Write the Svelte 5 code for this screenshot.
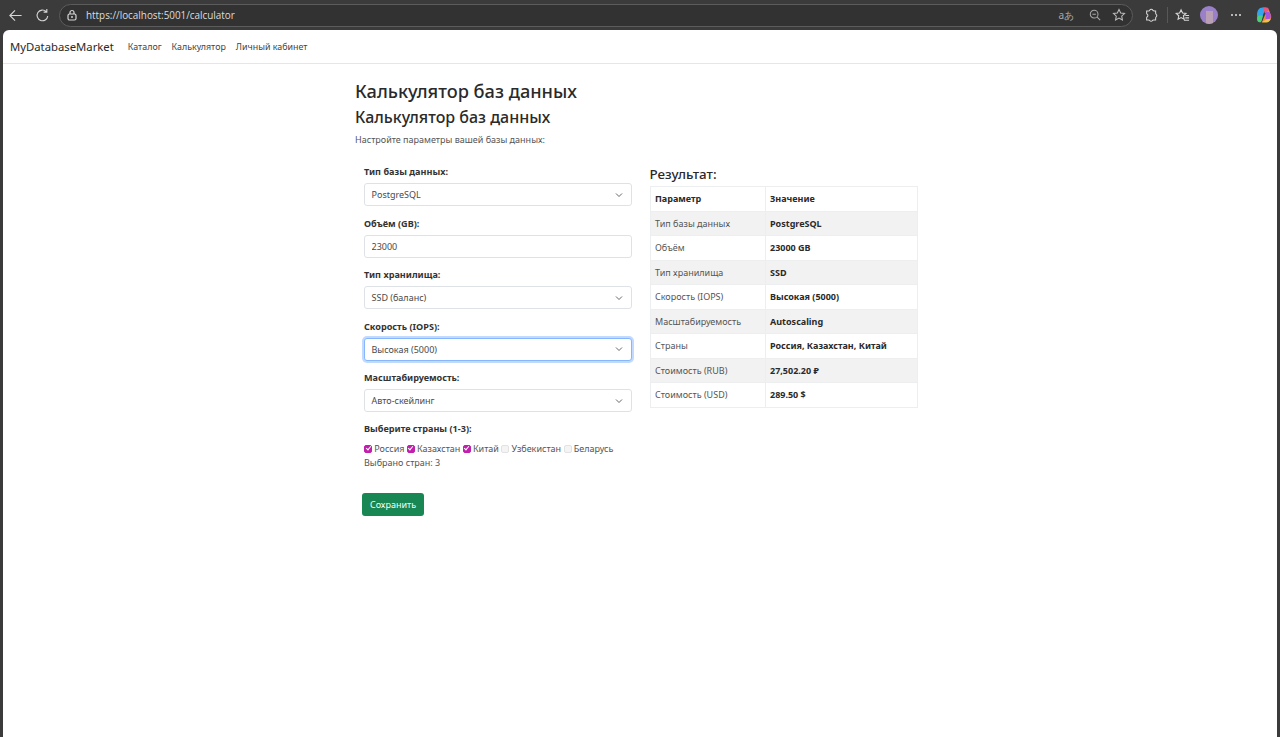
<script>
  const fields = [
    { label: 'Тип базы данных:', value: 'PostgreSQL' },
    { label: 'Объём (GB):', value: '23000', input: true },
    { label: 'Тип хранилища:', value: 'SSD (баланс)' },
    { label: 'Скорость (IOPS):', value: 'Высокая (5000)', focus: true },
    { label: 'Масштабируемость:', value: 'Авто-скейлинг' }
  ];

  const countries = [
    { name: 'Россия', on: true },
    { name: 'Казахстан', on: true },
    { name: 'Китай', on: true },
    { name: 'Узбекистан', on: false },
    { name: 'Беларусь', on: false }
  ];

  const rows = [
    ['Тип базы данных', 'PostgreSQL'],
    ['Объём', '23000 GB'],
    ['Тип хранилища', 'SSD'],
    ['Скорость (IOPS)', 'Высокая (5000)'],
    ['Масштабируемость', 'Autoscaling'],
    ['Страны', 'Россия, Казахстан, Китай'],
    ['Стоимость (RUB)', '27,502.20 ₽'],
    ['Стоимость (USD)', '289.50 $']
  ];
</script>

<div class="window">
  <header class="chrome">
    <svg class="ic back" viewBox="0 0 16 16"><path d="M14.5 8H2M7.5 2.5 2 8l5.5 5.5" /></svg>
    <svg class="ic reload" viewBox="0 0 16 16"><path d="M13.6 8.500A5.700 5.700 0 1 1 12 3.900M12.600 1v3.400H9.200" /></svg>
    <div class="address">
      <svg class="ic lock" viewBox="0 0 12 12"><rect x="2" y="5" width="8" height="6" rx="1.500" /><path d="M4 5V3.500a2 2 0 0 1 4 0V5" /><circle cx="6" cy="8" r=".4" /></svg>
      <span class="url">https://localhost:5001/calculator</span>
      <span class="spacer"></span>
      <span class="translate">aあ</span>
      <svg class="ic zoomi" viewBox="0 0 14 14"><circle cx="6" cy="6" r="4.500" /><path d="M9.500 9.500 13 13M4 6h4" /></svg>
      <svg class="ic star" viewBox="0 0 16 16"><path d="m8 1.800 1.900 4 4.400.5-3.200 3 .8 4.400L8 11.600l-3.900 2.100.8-4.400-3.200-3 4.400-.5z" /></svg>
    </div>
    <svg class="ic ext" viewBox="0 0 16 16"><path d="M6.500 2.500a2 2 0 0 1 3.600 0c.3.700 1 .9 2 .9h1.200v2.300c0 1 .2 1.200.6 1.500a1.900 1.900 0 0 1 0 3c-.4.3-.6.6-.6 1.400v2H11c-.8 0-1 .2-1.300.6a1.900 1.900 0 0 1-3.200 0c-.3-.4-.6-.6-1.300-.6H3v-2.400c0-.7.3-.9.7-1.200a1.700 1.700 0 0 0 0-2.800C3.300 6.900 3 6.600 3 6V3.400h2.200c.6 0 1-.3 1.300-.9z" /></svg>
    <span class="divider"></span>
    <svg class="ic fav" viewBox="0 0 16 16"><path d="M6.500 2 8.100 5.300 11.700 5.800 9 8.300 9.700 12 6.500 10.200 3.300 12 4 8.300 1.300 5.800 4.900 5.300zM11 8h4M11 10.500h4M9.500 13h5.500" /></svg>
    <div class="avatar"><span class="avatar-mark"></span></div>
    <span class="dots"><i></i><i></i><i></i></span>
    <svg class="copilot" viewBox="0 0 18 18">
      <path d="M2 9c0-4 2-7.500 5.500-7.500H11L8 9l-2 7C3.500 16 2 12.500 2 9z" fill="#35a4ea" />
      <path d="M2 13c0-2 1-3.500 3-3.500h3L6.500 15c-.4 1.200-1 1.500-2 1.300C3 16 2 14.800 2 13z" fill="#4bd07a" />
      <path d="M8 1.500h3.500c1 0 2 .7 2.300 1.700L15 7l-5 .5z" fill="#e8557f" />
      <path d="M13.500 4 16 9c.8 3.500-1 7-4.500 7H7l3-7z" fill="#f08a3c" />
      <path d="M11 6h3.500l1.200 3c.5 2-.5 4-2.200 4h-3z" fill="#a654e0" />
      <path d="M6.500 16.500h5c1.700 0 3.500-1.200 4-3.500l-4.500.5z" fill="#f5c23c" />
    </svg>
  </header>

  <div class="page">
    <nav class="navbar">
      <span class="brand">MyDatabaseMarket</span>
      <span class="nav-link">Каталог</span>
      <span class="nav-link">Калькулятор</span>
      <span class="nav-link">Личный кабинет</span>
    </nav>

    <main class="container">
      <h1>Калькулятор баз данных</h1>
      <h2>Калькулятор баз данных</h2>
      <p class="lead">Настройте параметры вашей базы данных:</p>

      <div class="columns">
        <form class="form" onsubmit={(e) => e.preventDefault()}>
          {#each fields as f}
            <div class="field">
              <div class="label">{f.label}</div>
              {#if f.input}
                <input class="control" type="text" value={f.value} />
              {:else}
                <div class="control select" class:focus={f.focus}>
                  <span>{f.value}</span>
                  <svg class="chevron" viewBox="0 0 16 16"><path d="m2 5 6 6 6-6" /></svg>
                </div>
              {/if}
            </div>
          {/each}

          <div class="label countries-label">Выберите страны (1-3):</div>
          <div class="countries">
            {#each countries as c}
              <label class="country"><input type="checkbox" checked={c.on} />{c.name}</label>
            {/each}
          </div>
          <div class="picked">Выбрано стран: 3</div>

          <button class="save" type="submit">Сохранить</button>
        </form>

        <section class="result">
          <h4>Результат:</h4>
          <table>
            <thead>
              <tr><th>Параметр</th><th>Значение</th></tr>
            </thead>
            <tbody>
              {#each rows as r}
                <tr><td>{r[0]}</td><td class="val">{r[1]}</td></tr>
              {/each}
            </tbody>
          </table>
        </section>
      </div>
    </main>
  </div>
</div>

<style>
  :global(body) {
    margin: 0;
    background: #3b3b3b;
  }

  .window {
    width: 1280px;
    height: 737px;
    display: flex;
    flex-direction: column;
    overflow: hidden;
    background: #3b3b3b;
    font-family: "Noto Sans", "Open Sans", sans-serif;
  }

  /* browser bar */
  .chrome {
    height: 30px;
    flex: none;
    display: flex;
    align-items: center;
    padding-left: 8px;
    box-sizing: border-box;
  }

  .ic {
    fill: none;
    stroke: #d6d6d6;
    stroke-width: 1.2;
    flex: none;
  }

  .back { width: 15px; height: 15px; }
  .reload { width: 15px; height: 15px; margin-left: 12px; }

  .address {
    width: 1074px;
    height: 23px;
    margin-left: 9px;
    border: 1px solid #5c5c5c;
    border-radius: 12px;
    box-sizing: border-box;
    background: #323232;
    display: flex;
    align-items: center;
    padding-left: 6px;
  }

  .lock { width: 12px; height: 12px; }

  .url {
    margin-left: 8px;
    font-family: "Open Sans", sans-serif;
    font-size: 9.9px;
    color: #dcdcdc;
  }

  .spacer { flex: 1; }

  .translate {
    font-size: 10px;
    color: #a8a8a8;
  }

  .zoomi { width: 12px; height: 12px; margin-left: 15px; stroke: #a8a8a8; }
  .star { width: 14px; height: 14px; margin-left: 11px; margin-right: 6px; stroke: #bdbdbd; }

  .ext { width: 14px; height: 14px; margin-left: 11px; }

  .divider {
    width: 1px;
    height: 16px;
    margin-left: 9px;
    background: #585858;
  }

  .fav { width: 15px; height: 15px; margin-left: 7px; }

  .avatar {
    width: 18px;
    height: 18px;
    margin-left: 10px;
    border-radius: 50%;
    background: #9a80c8;
    overflow: hidden;
    display: flex;
    justify-content: center;
    align-items: flex-end;
  }

  .avatar-mark {
    width: 7px;
    height: 13px;
    background: #b9a0b4;
  }

  .dots {
    display: flex;
    gap: 2px;
    margin-left: 13px;
  }

  .dots i {
    width: 2px;
    height: 2px;
    border-radius: 50%;
    background: #e0e0e0;
  }

  .copilot { width: 18px; height: 18px; margin-left: 14px; flex: none; }

  /* page */
  .page {
    flex: 1;
    margin: 0 3px;
    background: #fff;
    border-radius: 6px 6px 0 0;
    color: #212529;
  }

  .navbar {
    height: 34px;
    box-sizing: border-box;
    border-bottom: 1px solid #e6e6e6;
    display: flex;
    align-items: center;
    padding-left: 7px;
  }

  .brand {
    font-size: 11.3px;
    margin-right: 14px;
    color: #2a2a2a;
  }

  .nav-link {
    font-size: 8.9px;
    margin-right: 10px;
    color: #444;
  }

  .container {
    width: 570px;
    margin-left: 352px;
    padding-top: 15px;
  }

  h1 {
    margin: 0;
    font-size: 18.2px;
    line-height: 24px;
    font-weight: 500;
    color: #2a2a2a;
  }

  h2 {
    margin: 3px 0 0;
    font-size: 16px;
    line-height: 22px;
    font-weight: 500;
    color: #2a2a2a;
  }

  .lead {
    margin: 5px 0 0;
    font-size: 9px;
    line-height: 14px;
    color: #555;
  }

  .columns {
    display: flex;
    margin-top: 18px;
  }

  .form {
    width: 268px;
    margin-left: 9px;
  }

  .field {
    margin-bottom: 10.5px;
  }

  .label {
    font-size: 9.1px;
    line-height: 14px;
    font-weight: 700;
    color: #333;
    margin-bottom: 4px;
  }

  .control {
    display: block;
    width: 100%;
    height: 23px;
    box-sizing: border-box;
    border: 1px solid #dee2e6;
    border-radius: 3px;
    padding: 0 6.5px;
    font-family: inherit;
    font-size: 9px;
    color: #4a4a4a;
    background: #fff;
    outline: none;
  }

  .select {
    display: flex;
    align-items: center;
    justify-content: space-between;
    padding-right: 8px;
  }

  .focus {
    border-color: #86b7fe;
    box-shadow: 0 0 0 2px #c2daff;
  }

  .chevron {
    width: 8px;
    height: 8px;
    fill: none;
    stroke: #555;
    stroke-width: 1.8;
  }

  .countries-label {
    margin-top: -1px;
    margin-bottom: 6px;
  }

  .countries {
    display: flex;
    gap: 2.4px;
    font-size: 9px;
    line-height: 14px;
    color: #555;
  }

  .country {
    display: flex;
    align-items: center;
    white-space: nowrap;
  }

  .country input {
    appearance: none;
    position: relative;
    width: 8px;
    height: 8px;
    margin: 0 2.2px 0 0;
    box-sizing: border-box;
    border: 1px solid #e2e2e2;
    border-radius: 2px;
    background: #f4f4f4;
  }

  .country input:checked {
    border-color: #c21fae;
    background: #c21fae;
  }

  .country input:checked::after {
    content: '';
    position: absolute;
    left: 1.5px;
    top: -0.5px;
    width: 2px;
    height: 4px;
    border: solid #fff;
    border-width: 0 1px 1px 0;
    transform: rotate(40deg);
  }

  .picked {
    font-size: 9px;
    line-height: 14px;
    color: #555;
  }

  .save {
    display: block;
    margin: 23px 0 0 -2px;
    width: 62px;
    height: 23px;
    border: none;
    border-radius: 3px;
    background: #198754;
    color: #f2fff8;
    font-family: inherit;
    font-size: 9px;
    padding: 0;
  }

  .result {
    margin-left: 17.5px;
    width: 268px;
    margin-top: -1px;
  }

  h4 {
    margin: 0 0 2px;
    font-size: 13.4px;
    line-height: 20px;
    font-weight: 500;
    color: #2a2a2a;
  }

  table {
    width: 268px;
    border-collapse: collapse;
    table-layout: fixed;
    font-size: 9px;
    color: #555;
  }

  th, td {
    height: 24.5px;
    box-sizing: border-box;
    border: 1px solid #eceeef;
    padding: 0 4.5px;
    text-align: left;
  }

  th:first-child, td:first-child {
    width: 115px;
  }

  th, .val {
    font-weight: 700;
    color: #2a2a2a;
  }

  tbody tr:nth-child(odd) td {
    background: #f2f2f2;
  }
</style>
